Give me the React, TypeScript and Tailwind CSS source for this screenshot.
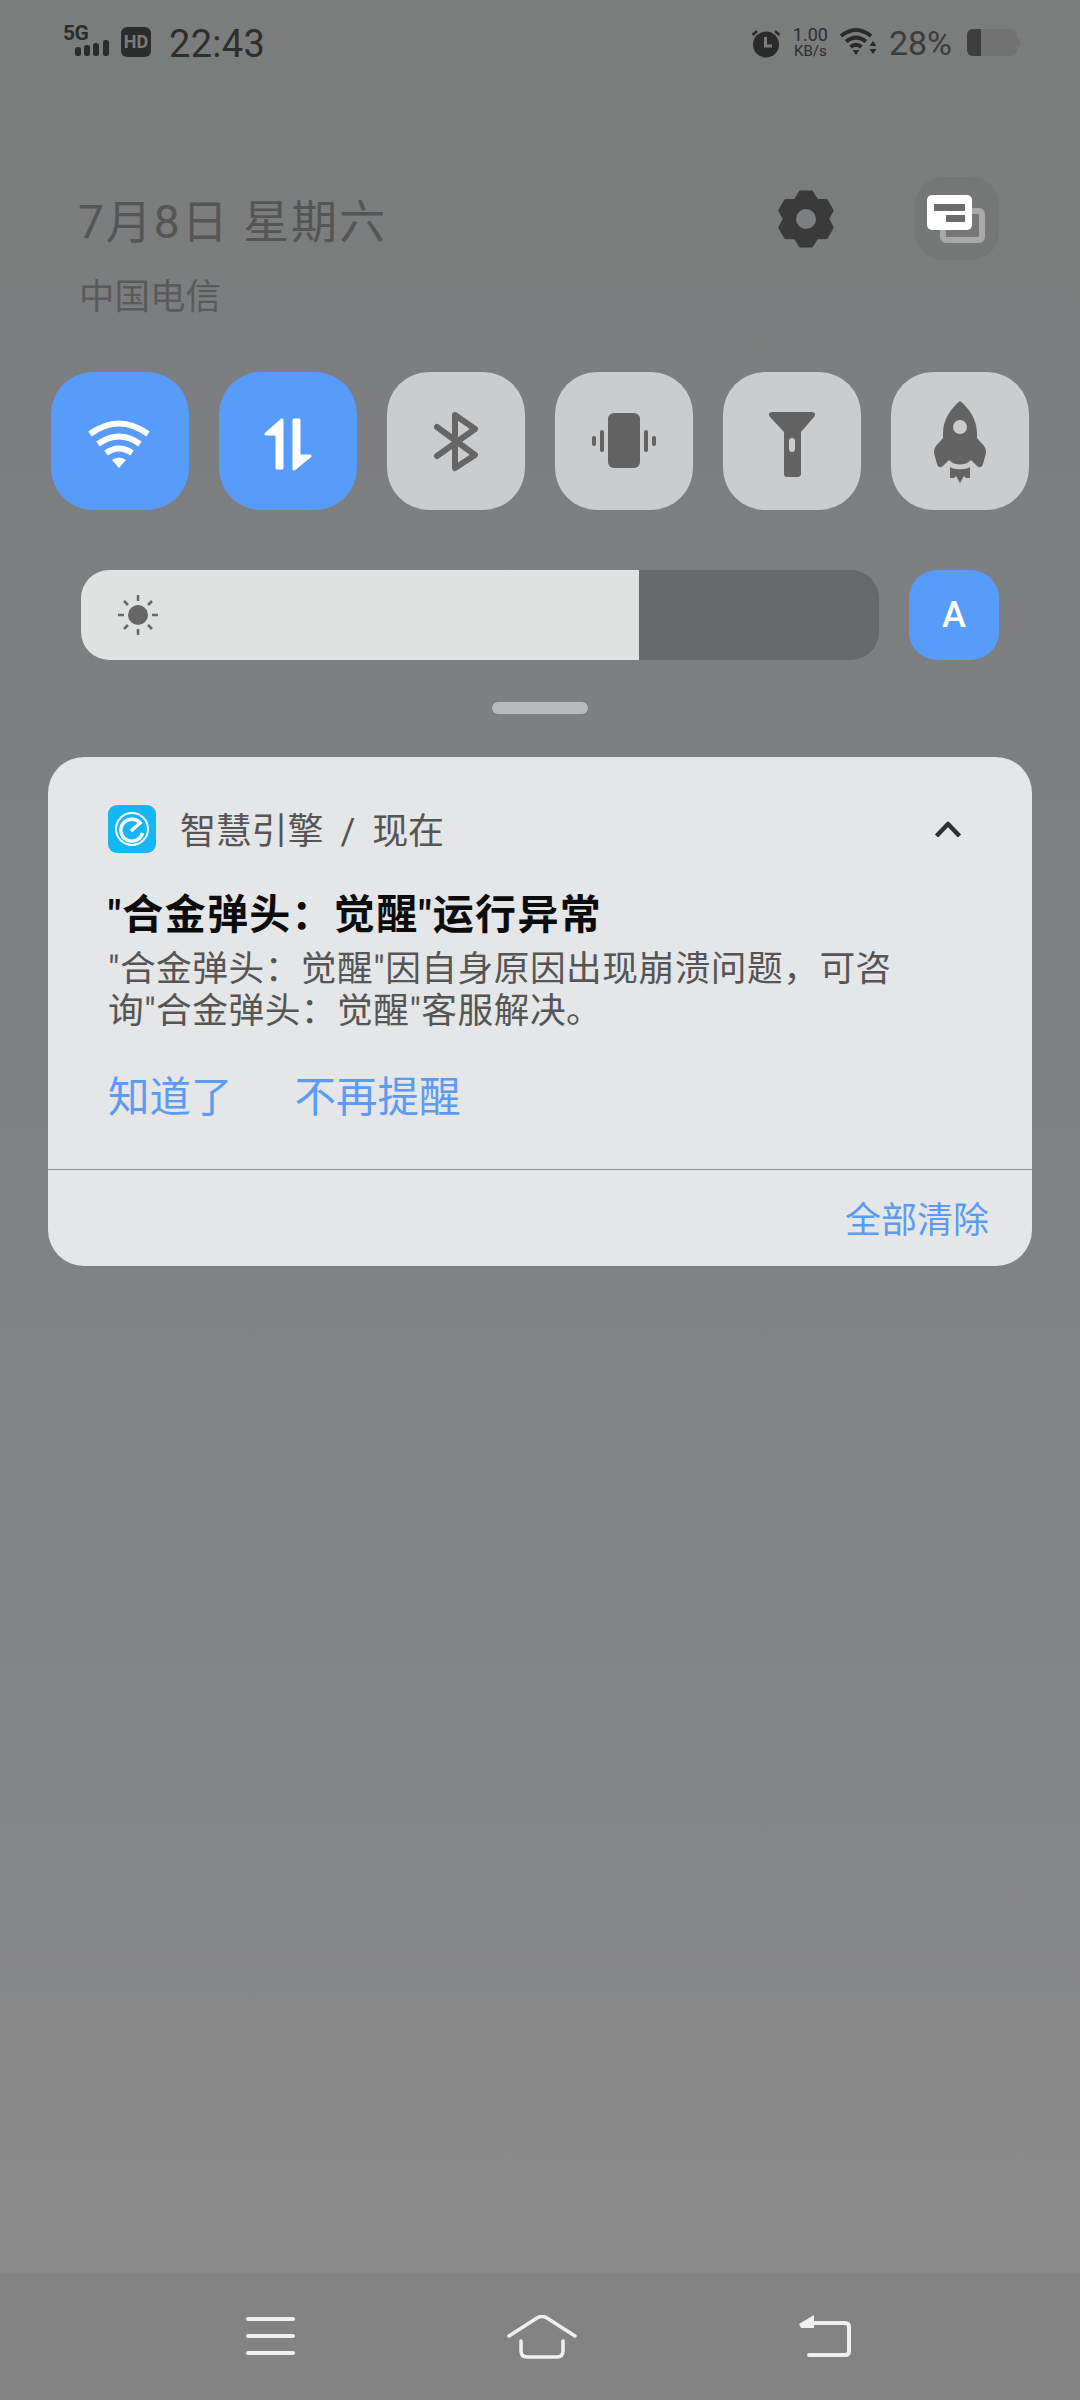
const cjk = "font-['Roboto','Noto_Sans_CJK_SC',sans-serif]";

function gearPath() {
  const pts: string[] = [];
  const pt = (deg: number, r: number) => {
    const a = (deg * Math.PI) / 180;
    return `${(30 + r * Math.cos(a)).toFixed(2)} ${(30 + r * Math.sin(a)).toFixed(2)}`;
  };
  for (let k = 0; k < 6; k++) {
    const a = -90 + 60 * k;
    pts.push(pt(a - 28, 22), pt(a - 12, 27.5), pt(a + 12, 27.5), pt(a + 28, 22));
  }
  return `M${pts.join(' L')}Z`;
}

function Tile({ on, children }: { on?: boolean; children: React.ReactNode }) {
  return (
    <div className={on ? 'h-[138px] w-[138px] rounded-[42px] bg-[#579cfb]' : 'h-[138px] w-[138px] rounded-[42px] bg-[#cbcccd]'}>
      <svg viewBox="0 0 138 138" className="h-full w-full">
        {children}
      </svg>
    </div>
  );
}

function StatusBar() {
  return (
    <div className="flex h-[86px] items-start justify-between pl-[63px] pr-[60px] pt-[25px]">
      <div className="flex items-start">
        <div className="relative h-[32px] w-[47px]">
          <span className="absolute left-0 top-[-4px] font-['Roboto'] text-[21px] font-bold leading-[24px] tracking-[-0.5px] text-[#2c2c2c]">5G</span>
          <svg viewBox="0 0 47 32" className="h-full w-full">
            <g fill="#2c2c2c">
              <rect x="12" y="22" width="6" height="9" rx="2.5" />
              <rect x="21" y="20" width="6" height="11" rx="2.5" />
              <rect x="30" y="18" width="6" height="13" rx="2.5" />
              <rect x="40" y="15" width="6" height="16" rx="2.5" />
            </g>
          </svg>
        </div>
        <div className="ml-[11px] mt-[2px] flex h-[30px] w-[30px] items-center justify-center rounded-[6px] bg-[#2c2c2c] font-['Roboto'] text-[18px] font-bold leading-none text-[#7c7c7c]">
          HD
        </div>
        <span className="ml-[18px] mt-[1px] font-['Roboto'] text-[38px] leading-[36px] tracking-[0.3px] text-[#2e2e2e]">22:43</span>
      </div>
      <div className="flex items-start">
        <svg viewBox="0 0 30 30" className="mt-[3px] h-[30px] w-[30px]">
          <circle cx="15" cy="16.5" r="13" fill="#2a2a2a" />
          <path d="M1.5 7 L6 3 M28.5 7 L24 3" stroke="#2a2a2a" strokeWidth="2.5" />
          <path d="M14.5 9 V18 H21" stroke="#7d7d7d" strokeWidth="3" fill="none" />
        </svg>
        <div className="ml-[11px] flex w-[37px] flex-col items-center font-['Roboto'] text-[#2e2e2e]">
          <span className="text-[18px] leading-[20px]">1.00</span>
          <span className="text-[15px] leading-[13px]">KB/s</span>
        </div>
        <svg viewBox="0 0 38 30" className="ml-[10px] mt-[2px] h-[30px] w-[38px]">
          <g fill="none" stroke="#2a2a2a" strokeWidth="4">
            <path d="M2 9 Q17 -3 32 9" />
            <path d="M7 14.5 Q17 6.5 27 14.5" />
            <path d="M11.5 20 Q17 15.5 22.5 20" />
          </g>
          <path d="M13.5 23 H20.5 L17 28Z M34 14 L37.5 19 H30.5Z M30.5 22 H37.5 L34 27Z" fill="#2a2a2a" />
        </svg>
        <span className="ml-[12px] mt-[2px] font-['Roboto'] text-[34px] leading-[32px] text-[#3c3c3c]">28%</span>
        <div className="ml-[15px] mt-[4px] flex h-[27px] w-[50px] overflow-hidden rounded-[6px] bg-[#727272]">
          <div className="h-full w-[14px] bg-[#3e3e3e]" />
        </div>
        <div className="mt-[13px] h-[9px] w-[3px] rounded-r-[2px] bg-[#727272]" />
      </div>
    </div>
  );
}

function DateRow() {
  return (
    <div className="mt-[91px] flex items-start justify-between pl-[78px] pr-[81px]">
      <div className={`${cjk} h-[141px]`}>
        <div className="mt-[15px] text-[46px] leading-[60px] tracking-[2px] text-[#555555]">7月8日 星期六</div>
        <div className="ml-[1px] mt-[21px] text-[35.5px] leading-[48px] text-[#5a5a5a]">中国电信</div>
      </div>
      <div className="flex items-center">
        <svg viewBox="0 0 60 60" className="mr-[79px] h-[60px] w-[60px] overflow-visible">
          <path d={gearPath()} fill="#3a3a3a" stroke="#3a3a3a" strokeWidth="3" strokeLinejoin="round" />
          <circle cx="30" cy="30" r="10" fill="#7d7e7f" />
        </svg>
        <div className="h-[83px] w-[84px] rounded-[28px] bg-[#757676]">
          <svg viewBox="0 0 84 83" className="h-full w-full">
            <rect x="28" y="34" width="39" height="29" rx="3" fill="none" stroke="#a9a9a9" strokeWidth="6" />
            <rect x="12" y="18" width="45" height="35" rx="5" fill="#ffffff" />
            <rect x="19" y="27" width="31" height="7" fill="#6b6b6b" />
            <rect x="31" y="38" width="19" height="7" fill="#6b6b6b" />
          </svg>
        </div>
      </div>
    </div>
  );
}

function Tiles() {
  return (
    <div className="mt-[54px] flex gap-[30px] pl-[51px]">
      <Tile on>
        <g fill="none" stroke="#ffffff" strokeWidth="6">
          <path d="M39 62 Q68 41 97 62" />
          <path d="M47 72 Q68 57 89 72" />
          <path d="M55 81 Q68 72 81 81" />
        </g>
        <path d="M61 88 Q68 83 75 88 L68 96Z" fill="#ffffff" />
      </Tile>
      <Tile on>
        <g fill="#ffffff" stroke="#ffffff" strokeWidth="3" strokeLinejoin="round">
          <path d="M63 48 V96 H58 V62 H47Z" />
          <path d="M75 48 H80 V84 H91 L75 97Z" />
        </g>
      </Tile>
      <Tile>
        <path d="M50 55 L88 83 L68 96 V43 L88 57 L50 84" fill="none" stroke="#666666" strokeWidth="6" strokeLinecap="round" strokeLinejoin="round" />
      </Tile>
      <Tile>
        <g fill="#636363">
          <rect x="53" y="41" width="32" height="55" rx="6" />
          <rect x="45" y="58" width="4" height="22" rx="2" />
          <rect x="89" y="58" width="4" height="22" rx="2" />
          <rect x="37" y="64" width="4" height="10" rx="2" />
          <rect x="97" y="64" width="4" height="10" rx="2" />
        </g>
      </Tile>
      <Tile>
        <path d="M49 40 H89 C92 40 93 43 91 45 L78 60 V102 C78 104 76 105 75 105 H64 C62 105 61 104 61 102 V60 L47 45 C45 43 46 40 49 40Z" fill="#636363" />
        <rect x="66" y="66" width="6" height="14" rx="3" fill="#cbcccd" />
      </Tile>
      <Tile>
        <path d="M69 29 C60 36 52 48 52 61 V66 L45 74 C43 77 43 79 43 81 L46 92 C47 96 50 96 52 94 L58 88 C64 94 74 94 80 88 L86 94 C88 96 91 96 92 92 L95 81 C95 79 95 77 93 74 L86 66 V61 C86 48 78 36 69 29Z" fill="#636363" />
        <circle cx="69" cy="55" r="7" fill="#cbcccd" />
        <path d="M59 95 C63 98 75 98 79 95 V106 H75 L73 104 L69 111 L65 104 L63 106 H59Z" fill="#636363" />
      </Tile>
    </div>
  );
}

function BrightnessRow() {
  return (
    <div className="mt-[60px] flex items-center pl-[81px]">
      <div className="flex h-[90px] w-[798px] overflow-hidden rounded-[28px] bg-[#67686b]">
        <div className="flex h-full w-[558px] items-center bg-[#e0e1e1] pl-[37px]">
          <svg viewBox="0 0 40 40" className="h-[40px] w-[40px]">
            <circle cx="20" cy="20" r="10" fill="#666666" />
            <path d="M20 0 V6 M20 34 V40 M0 20 H6 M34 20 H40 M6 6 L10 10 M30 30 L34 34 M34 6 L30 10 M10 30 L6 34" stroke="#666666" strokeWidth="2.5" />
          </svg>
        </div>
      </div>
      <div className="ml-[30px] flex h-[90px] w-[90px] items-center justify-center rounded-[28px] bg-[#579cfb] font-['Roboto'] text-[36px] font-medium leading-none text-white">
        A
      </div>
    </div>
  );
}

function NotificationCard() {
  return (
    <div className="mx-[48px] mt-[43px] flex h-[509px] flex-col rounded-[36px] bg-[#e5e6e7]">
      <div className="flex flex-1 flex-col pl-[60px] pr-[70px] pt-[47px]">
        <div className="flex h-[49px] items-center justify-between">
          <div className="flex items-center">
            <svg viewBox="0 0 48 48" className="h-[48px] w-[48px]">
              <rect width="48" height="48" rx="9" fill="#12b7f3" />
              <circle cx="24" cy="24" r="16" fill="none" stroke="#ffffff" strokeWidth="2" />
              <path d="M33 19 A11 11 0 1 0 34.5 28" fill="none" stroke="#ffffff" strokeWidth="3.5" />
              <path d="M23 26 L33 17" stroke="#ffffff" strokeWidth="3.5" />
            </svg>
            <span className={`${cjk} ml-[24px] mt-[6px] text-[36px] leading-[48px] tracking-[-0.2px] text-[#555555] [word-spacing:8.5px]`}>智慧引擎 / 现在</span>
          </div>
          <svg viewBox="0 0 28 18" className="h-[18px] w-[28px]">
            <path d="M2.5 16 L14 4 L25.5 16" fill="none" stroke="#2f2f2f" strokeWidth="4.5" strokeLinejoin="round" />
          </svg>
        </div>
        <div className={`${cjk} mt-[34px] text-[41px] font-bold leading-[56px] tracking-[1.3px] text-[#0c0c0c]`}>&quot;合金弹头：觉醒&quot;运行异常</div>
        <div className={`${cjk} mt-[5px] text-[35.7px] leading-[42px] tracking-[0.5px] text-[#555555]`}>
          &quot;合金弹头：觉醒&quot;因自身原因出现崩溃问题，可咨
          <br />
          询&quot;合金弹头：觉醒&quot;客服解决。
        </div>
        <div className={`${cjk} mt-[38px] flex gap-[62px] text-[41.5px] leading-[56px] text-[#5b9bf2]`}>
          <span>知道了</span>
          <span>不再提醒</span>
        </div>
      </div>
      <div className="h-[1px] bg-[#8d8f92]" />
      <div className={`${cjk} flex h-[96px] items-center justify-end pr-[43px] pt-[6px] text-[36px] leading-[48px] text-[#5b9bf2]`}>全部清除</div>
    </div>
  );
}

function NavBar() {
  return (
    <div className="flex h-[126px] items-start bg-[#848383] pl-[246px] pt-[41px]">
      <svg viewBox="0 0 49 44" className="mt-[2px] h-[44px] w-[49px]">
        <path d="M2 2 H47 M2 19 H47 M2 36 H47" stroke="#efefef" strokeWidth="4" strokeLinecap="round" />
      </svg>
      <svg viewBox="0 0 70 44" className="ml-[212px] h-[44px] w-[70px]">
        <path d="M2 20 L30 2 Q35 -1 40 2 L68 20" transform="translate(0 1)" fill="none" stroke="#efefef" strokeWidth="3.5" strokeLinecap="round" />
        <path d="M14 26 V36 Q14 42 20 42 H50 Q56 42 56 36 V26" fill="none" stroke="#efefef" strokeWidth="3.5" strokeLinecap="round" />
      </svg>
      <svg viewBox="0 0 52 44" className="ml-[222px] h-[44px] w-[52px]">
        <path d="M0 9 L15 0 V13 H2Z" fill="#efefef" />
        <path d="M10 8 H46 Q50 8 50 12 V36 Q50 40 46 40 H10" fill="none" stroke="#efefef" strokeWidth="4" strokeLinecap="round" />
      </svg>
    </div>
  );
}

export default function App() {
  return (
    <div className="flex h-[2400px] w-[1080px] flex-col overflow-hidden bg-gradient-to-b from-[#7b7c7c] via-[#7f8184] to-[#8b8b8b]">
      <StatusBar />
      <DateRow />
      <Tiles />
      <BrightnessRow />
      <div className="ml-[492px] mt-[42px] h-[12px] w-[96px] rounded-full bg-[#b9babb]" />
      <NotificationCard />
      <div className="flex-1" />
      <NavBar />
    </div>
  );
}
